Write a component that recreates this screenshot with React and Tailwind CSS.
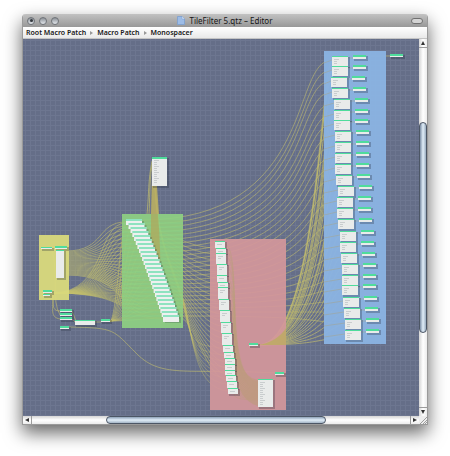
const BLUE_X = [332, 332, 331, 332, 334, 334, 334, 335, 335, 335, 335, 336, 338, 337, 337, 338, 340, 340, 341, 342, 342, 342, 343, 344, 345, 345];
const BLUE_Y = [56, 66, 77, 88, 99, 110, 120, 131, 142, 153, 164, 175, 186, 197, 208, 219, 231, 242, 253, 264, 275, 285, 297, 308, 319, 330];
const BLUE = BLUE_X.map((x, i) => ({ x, y: BLUE_Y[i] }));

const GREEN = Array.from({ length: 25 }, (_, i) => ({
    x: 126 + 37 * Math.pow(i / 24, 0.85),
    y: 219 + i * 4,
}));

const RED = [
    [215, 241], [216, 248], [216, 253], [217, 264], [217, 275], [218, 282],
    [218, 287], [219, 299], [220, 310], [221, 322], [222, 333], [223, 345],
    [224, 352], [225, 358], [225, 364], [225, 370], [226, 375], [227, 381], [228, 388],
].map(([x, y]) => ({ x, y }));

// x, y, width, height
const SMALL = [
    [41, 247, 11, 2], [55, 246, 12, 3], [43, 290, 9, 3], [43, 294, 7, 2],
    [60, 309, 12, 3], [60, 313, 12, 3], [60, 317, 12, 3], [60, 326, 9, 3],
    [101, 319, 9, 3], [249, 343, 9, 3], [275, 372, 9, 3], [390, 54, 13, 3],
];

function curve(x1, y1, x2, y2, a = 0.5, b = 0.5) {
    const w = x2 - x1;
    return `M${x1} ${y1}C${x1 + w * a} ${y1} ${x2 - w * b} ${y2} ${x2} ${y2}`;
}

function Wires() {
    const main = [];
    const inputs = [];
    GREEN.forEach((g, i) => {
        const b = BLUE[i];
        main.push(curve(g.x + 16, g.y + 1, b.x, b.y + 4, 0.92, 0.22));
        inputs.push(curve(66, 251 + i, g.x, g.y + 3, 0.66, 0.5));
        inputs.push(curve(52, 293, g.x, g.y + 4, 0.75, 0.4));
        if (i % 2 === 0) inputs.push(curve(110, 321, g.x, g.y + 3, 0.4, 0.3));
        if (i > 1) main.push(curve(g.x + 16, g.y + 2, 216 + i / 2, 236 + i * 6, 0.3, 0.45));
    });
    const fan = BLUE.map((b) => curve(258, 345, b.x, b.y + 5, 0.8, 0.15));
    const drop = RED.slice(11).map((r, i) => (
        `M155 186C158 250 ${174 + i / 3} 270 ${184 + i / 4} 308C${192 + i / 4} 345 196 ${r.y} ${r.x} ${r.y + 3}`
    ));
    return (
        <g fill="none" stroke="#c3be6c">
            <path d={main.join("")} strokeWidth="0.7" opacity="0.8" />
            <path d={inputs.join("")} strokeWidth="0.7" opacity="0.85" />
            <path d={fan.join("")} strokeWidth="0.8" opacity="0.85" />
            <path d={drop.join("")} strokeWidth="0.5" opacity="0.8" />
            <path d="M152 161C148 180 149 195 147 214M152 165C149 185 150 200 149 214" strokeWidth="0.7" />
            <path d="M152 175L151 214H159L157 186H152Z" fill="#b9ae63" stroke="none" opacity="0.9" />
            <path d="M53 293C53 311 50 317 60 319M52 293C55 303 50 311 60 311M52 250C59 275 51 300 60 315" strokeWidth="0.6" />
            <path d="M69 327C116 328 112 329 137 354S190 368 276 373M72 311L76 321M72 319L76 323M95 322H101M365 56H390" strokeWidth="0.6" />
        </g>
    );
}

function FaintWires() {
    return (
        <g fill="none" stroke="#b99a50">
            <path
                d={GREEN.map((g) => `M122 ${g.y + 3}H${g.x}M${g.x + 16} ${g.y + 2}H183`).join("")}
                strokeWidth="0.5"
                opacity="0.3"
            />
            <path
                d={RED.map((r, i) => `M${r.x + 9} ${r.y + 3}C${244 - i / 3} ${r.y + 3} 222 ${382 + i} 259 ${382 + i}`).join("")}
                stroke="#b8a078"
                strokeWidth="1"
                opacity="0.4"
            />
            <path d="M231 300C238 360 240 376 258 380V406C244 402 238 390 236 374Z" fill="#bb9a78" stroke="none" opacity="0.55" />
            <path d="M151 214H158C159 230 161 255 160 270L151 244Z" fill="#b3a458" stroke="none" opacity="0.65" />
            <path d="M258 345C270 344 281 336 286 328V345Z" fill="#b9ad5c" stroke="none" opacity="0.75" />
            <path d={BLUE.map((b) => `M324 ${b.y + 7}L${b.x} ${b.y + 4}M${b.x + 16} ${b.y + 2}H${b.x + 21}`).join("")} strokeWidth="0.6" opacity="0.5" />
        </g>
    );
}

function Node({ x, y, w, h, ports = 0, cap = 2 }) {
    return (
        <g>
            <rect x={x + 1} y={y + 1} width={w + 1} height={h + 1} fill="#1f2937" opacity="0.28" />
            <rect x={x} y={y} width={w} height={h} fill="#e9ebea" />
            <rect x={x} y={y} width={w} height={cap} fill="#4fdc9c" />
            {Array.from({ length: ports }, (_, i) => (
                <rect key={i} x={x + 2} y={y + 3 + i * 2} width={i % 3 ? 3 : 5} height="1" fill="#a9afb2" opacity="0.5" />
            ))}
        </g>
    );
}

function PatchGraph() {
    return (
        <svg viewBox="23 39 396 377" className="block w-full" role="img" aria-label="Monospacer">
            <defs>
                <pattern id="grid" width="5" height="5" patternUnits="userSpaceOnUse">
                    <path d="M0 0.5H5M0.5 0V5" stroke="#727b95" strokeWidth="1" opacity="0.6" />
                </pattern>
            </defs>
            <rect x="23" y="39" width="396" height="377" fill="#656e88" />
            <rect x="23" y="39" width="396" height="377" fill="url(#grid)" />
            <Wires />
            <rect x="39" y="235" width="30" height="65" fill="#d9d97c" opacity="0.95" />
            <rect x="122" y="214" width="61" height="114" fill="#8ed082" opacity="0.92" />
            <rect x="210" y="239" width="76" height="171" fill="#d4979b" opacity="0.92" />
            <rect x="324" y="51" width="62" height="293" fill="#8ab3e2" opacity="0.96" />
            <FaintWires />

            {GREEN.map((g, i) => (
                <g key={i}>
                    <rect x={g.x + 2} y={g.y + 2} width="16" height="6" fill="#1f2937" opacity="0.22" />
                    <rect x={g.x} y={g.y} width="16" height={i === 24 ? 7 : 6} fill="#eef0ef" />
                    <rect x={g.x} y={g.y} width="16" height="2" fill="#6fdfb0" opacity="0.75" />
                </g>
            ))}
            {RED.map((r, i) => {
                const next = RED[i + 1] ? RED[i + 1].y : 394;
                return <Node key={i} x={r.x} y={r.y} w={10} h={next - r.y} cap={1} ports={next - r.y > 8 ? 2 : 1} />;
            })}
            {BLUE.map((b, i) => (
                <g key={i}>
                    <Node x={b.x} y={b.y} w={16} h={10} ports={3} cap={1} />
                    <Node x={b.x + 21} y={b.y - 1} w={13} h={4} />
                </g>
            ))}
            {SMALL.map(([x, y, w, h]) => (
                <Node key={`${x}-${y}`} x={x} y={y} w={w} h={h} cap={h - 1} />
            ))}
            <Node x={56} y={250} w={8} h={28} cap={1} />
            <Node x={75} y={320} w={20} h={5} cap={1} />
            <Node x={152} y={157} w={15} h={29} ports={12} />
            <Node x={258} y={379} w={15} h={28} ports={12} cap={1} />
        </svg>
    );
}

function LightButton({ label, dirty }) {
    return (
        <button
            type="button"
            aria-label={label}
            className="flex h-2 w-2 items-center justify-center rounded-full border border-[#6f7378] bg-gradient-to-b from-[#8b9097] to-[#e6eaee]"
        >
            {dirty && <span className="h-[3px] w-[3px] rounded-full bg-[#33373d]" />}
        </button>
    );
}

function Arrow({ d, label }) {
    return (
        <button type="button" aria-label={label} className="flex h-2 w-2 shrink-0 items-center justify-center">
            <svg viewBox="0 0 8 8" className="h-2 w-2" fill="#333"><path d={d} /></svg>
        </button>
    );
}

function TitleBar() {
    return (
        <header className="flex h-[13px] items-center justify-between rounded-t-[3px] bg-gradient-to-b from-[#c2c2c2] to-[#989898] px-1">
            <div className="flex w-10 gap-1">
                <LightButton label="Close" dirty />
                <LightButton label="Minimize" />
                <LightButton label="Zoom" />
            </div>
            <h1 className="flex items-center gap-1 whitespace-nowrap text-[8px] leading-none text-[#161616]">
                <svg viewBox="0 0 8 9" className="h-[9px] w-2">
                    <path d="M0.5 0.5H5L7.5 3V8.5H0.5Z" fill="#9dbce6" stroke="#7b9fd0" strokeWidth="0.8" />
                    <path d="M5 0.5V3H7.5" fill="#dbe8f8" stroke="#7b9fd0" strokeWidth="0.5" />
                </svg>
                TileFilter 5.qtz – Editor
            </h1>
            <div className="flex w-10 justify-end">
                <button type="button" aria-label="Toggle toolbar" className="h-[6px] w-3 rounded-full border border-[#707070] bg-[#d4d4d4]" />
            </div>
        </header>
    );
}

function Breadcrumbs() {
    const path = ["Root Macro Patch", "Macro Patch", "Monospacer"];
    return (
        <nav className="flex h-3 items-center gap-1 border-b border-[#c4c4c4] bg-gradient-to-b from-white to-[#e9e9e9] px-[3px] text-[7px] font-semibold leading-none text-[#161616]">
            {path.map((name, i) => (
                <span key={name} className="flex items-center gap-1 whitespace-nowrap">
                    {i > 0 && <svg viewBox="0 0 3 4" className="h-1 w-[3px]" fill="#999"><path d="M0 0L3 2L0 4Z" /></svg>}
                    <button type="button">{name}</button>
                </span>
            ))}
        </nav>
    );
}

export default function App() {
    return (
        <main className="min-h-screen bg-white px-[22px] py-[14px] font-['Noto_Sans',sans-serif]">
            <section className="rounded-t-[4px] border-x border-b border-[#9a9a9a] shadow-[0_8px_18px_0_rgba(0,0,0,0.6)]">
                <TitleBar />
                <Breadcrumbs />
                <div className="flex">
                    <div className="min-w-0 flex-1">
                        <PatchGraph />
                    </div>
                    <div className="flex w-2 flex-col bg-gradient-to-r from-[#d5d5d5] via-white to-[#ececec]">
                        <Arrow label="Scroll up" d="M4 2L6 6H2Z" />
                        <div className="flex flex-1 flex-col border-y border-[#9c9c9c]">
                            <div className="flex-[74]" />
                            <div className="flex-[210] rounded-[4px] border border-[#4c5665] bg-gradient-to-r from-[#7c8ea5] via-[#e2eff9] to-[#9aacbf]" />
                            <div className="flex-[74]" />
                        </div>
                        <Arrow label="Scroll down" d="M2 2H6L4 6Z" />
                    </div>
                </div>
                <div className="flex h-2 bg-gradient-to-b from-[#d5d5d5] via-white to-[#ececec]">
                    <Arrow label="Scroll left" d="M6 2V6L2 4Z" />
                    <div className="flex flex-1 border-x border-[#9c9c9c]">
                        <div className="flex-[74]" />
                        <div className="flex-[220] rounded-[4px] border border-[#4c5665] bg-gradient-to-b from-[#8fa2b8] via-[#e2eff9] to-[#a4b5c6]" />
                        <div className="flex-[84]" />
                    </div>
                    <Arrow label="Scroll right" d="M2 2L6 4L2 6Z" />
                    <svg viewBox="0 0 8 8" className="h-2 w-2 shrink-0 bg-[#eee]" stroke="#888" strokeWidth="0.8">
                        <path d="M1 8L8 1M4 8L8 4M6 8L8 6" />
                    </svg>
                </div>
            </section>
        </main>
    );
}
